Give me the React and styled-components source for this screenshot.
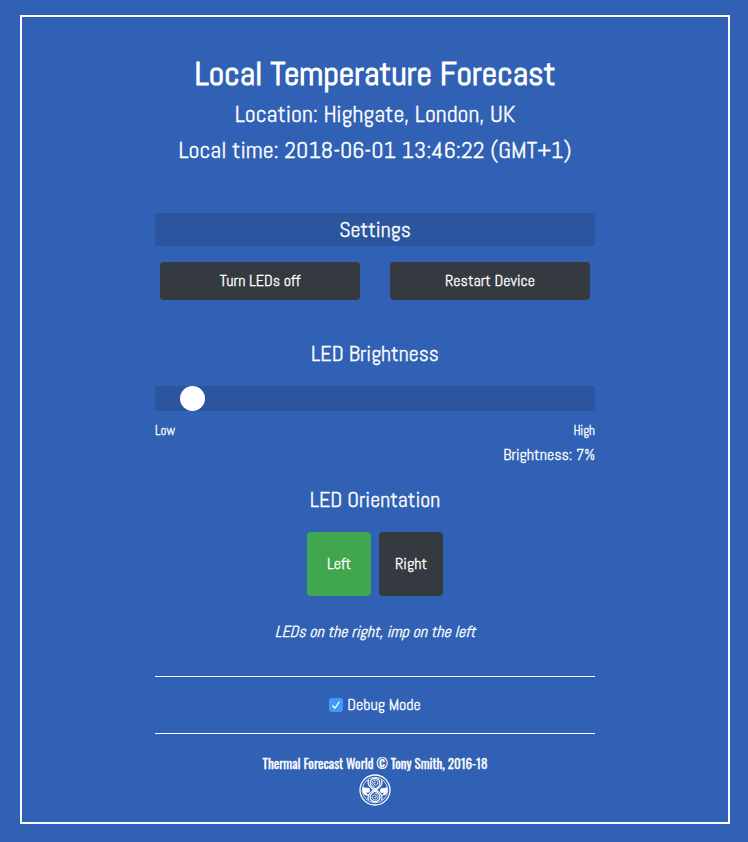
import React, { useState } from "react";
import styled, { createGlobalStyle } from "styled-components";

const GlobalStyle = createGlobalStyle`
  *, *::before, *::after { box-sizing: border-box; }
  body {
    margin: 0;
    background: #3061b4;
    color: #fff;
    font-family: Abel, "Liberation Sans Narrow", "Roboto Condensed", "Liberation Sans", sans-serif;
    font-size: 16px;
    line-height: 24px;
    -webkit-text-stroke: 0.3px currentColor;
  }
  button, input { font: inherit; }
`;

const Frame = styled.main`
  margin: 15px 18px 18px 20px;
  padding: 34px 20px 16px;
  border: 2px solid #fff;
  display: flex;
  flex-direction: column;
  align-items: center;
  text-align: center;
`;

const Title = styled.h1`
  margin: 0;
  font-size: 34px;
  line-height: 45px;
  font-weight: 700;
  -webkit-text-stroke: 0;
`;

const Info = styled.p`
  margin: 0;
  font-size: 24px;
  line-height: 36px;
`;

const Panel = styled.div`
  width: 100%;
  max-width: 440px;
  margin-top: 45px;
  display: flex;
  flex-direction: column;
`;

const Heading = styled.h2`
  margin: 0 0 16px;
  padding-bottom: 1px;
  font-size: 22px;
  line-height: 32px;
  font-weight: 400;
  background: ${(p) => (p.$bar ? "#2b569f" : "transparent")};
`;

const Section = styled.section`
  margin-top: ${(p) => p.$gap || 0}px;
`;

const Actions = styled.div`
  display: flex;
  gap: 30px;
  padding: 0 5px;
`;

const Button = styled.button`
  flex: 1;
  height: 38px;
  padding: 0;
  border: 0;
  border-radius: 4px;
  color: #fff;
  background: #343a40;
  cursor: pointer;
`;

const Slider = styled.input`
  display: block;
  appearance: none;
  width: 100%;
  height: 25px;
  margin: 0;
  background: #2b569f;
  &::-webkit-slider-thumb {
    appearance: none;
    width: 25px;
    height: 25px;
    border-radius: 50%;
    background: #fff;
  }
  &::-moz-range-thumb {
    width: 25px;
    height: 25px;
    border: 0;
    border-radius: 50%;
    background: #fff;
  }
`;

const Scale = styled.div`
  display: flex;
  justify-content: space-between;
  margin-top: 8px;
  font-size: 13px;
`;

const Reading = styled.output`
  display: block;
  text-align: right;
`;

const Sides = styled.div`
  display: flex;
  justify-content: center;
  gap: 8px;
`;

const SideButton = styled(Button)`
  flex: none;
  width: 64px;
  height: 64px;
  background: ${(p) => (p.$active ? "#3fa64d" : "#343a40")};
`;

const Note = styled.p`
  margin: 24px 0 32px;
  font-style: italic;
`;

const Debug = styled.label`
  display: flex;
  align-items: center;
  justify-content: center;
  gap: 4px;
  padding: 16px 0;
  border-top: 1px solid #fff;
  border-bottom: 1px solid #fff;
`;

const CheckBox = styled.span`
  display: grid;
  width: 14px;
  height: 14px;
  > * { grid-area: 1 / 1; }
`;

const CheckInput = styled.input`
  appearance: none;
  width: 14px;
  height: 14px;
  margin: 0;
  border-radius: 3px;
  background: #fff;
  &:checked { background: #3f99f8; }
`;

const Tick = styled.svg`
  pointer-events: none;
`;

const Footer = styled.footer`
  display: flex;
  flex-direction: column;
  align-items: center;
  margin-top: 18px;
  font-family: Oswald, Abel, "Liberation Sans Narrow", "Liberation Sans", sans-serif;
  font-size: 13px;
  line-height: 22px;
  font-weight: 400;
`;

const Seal = () => (
  <svg width="32" height="32" viewBox="0 0 64 64" fill="none" stroke="#fff" role="img" aria-label="Seal">
    <circle cx="32" cy="32" r="30" strokeWidth="2.6" />
    <circle cx="32" cy="32" r="25.5" strokeWidth="1.6" />
    <path strokeWidth="2.2" d="M19 52C15 42 24 36 31 31C40 25 44 21 41 14C38 7 26 7 23 14C20 21 24 25 33 31C40 36 49 42 45 52" />
    <path strokeWidth="2.2" d="M45 12C49 22 40 28 33 33C24 39 20 43 23 50C26 57 38 57 41 50C44 43 40 39 31 33C24 28 15 22 19 12" />
    <path strokeWidth="1.8" d="M32 26C25 23 24 16 29 13C34 10 40 15 37 20C34 24 28 21 30 17C31 15 34 16 33 18" />
    <path strokeWidth="1.8" d="M32 38C39 41 40 48 35 51C30 54 24 49 27 44C30 40 36 43 34 47C33 49 30 48 31 46" />
    <path fill="#fff" stroke="none" d="M8 25C13 31 19 24 22 31C23 37 17 39 15 36C15 40 18 42 21 40C17 47 8 42 7 34Z" />
    <path fill="#fff" stroke="none" d="M56 25L57 34C56 42 49 45 43 42C47 42 50 40 49 37C45 40 41 36 42 32C45 24 52 31 56 25Z" />
  </svg>
);

export default function App() {
  const [ledsOn, setLedsOn] = useState(true);
  const [brightness, setBrightness] = useState(7);
  const [side, setSide] = useState("left");
  const [debug, setDebug] = useState(true);

  return (
    <>
      <GlobalStyle />
      <Frame>
        <Title>Local Temperature Forecast</Title>
        <Info>Location: Highgate, London, UK</Info>
        <Info>Local time: 2018-06-01 13:46:22 (GMT+1)</Info>
        <Panel>
          <Section>
            <Heading $bar>Settings</Heading>
            <Actions>
              <Button type="button" onClick={() => setLedsOn(!ledsOn)}>
                {ledsOn ? "Turn LEDs off" : "Turn LEDs on"}
              </Button>
              <Button type="button">Restart Device</Button>
            </Actions>
          </Section>
          <Section $gap={37}>
            <Heading as="h3" id="brightness-label">LED Brightness</Heading>
            <Slider
              type="range"
              id="brightness"
              min="1"
              max="100"
              value={brightness}
              aria-labelledby="brightness-label"
              onChange={(e) => setBrightness(Number(e.target.value))}
            />
            <Scale>
              <span>Low</span>
              <span>High</span>
            </Scale>
            <Reading htmlFor="brightness">{`Brightness: ${brightness}%`}</Reading>
          </Section>
          <Section $gap={16}>
            <Heading as="h3">LED Orientation</Heading>
            <Sides>
              <SideButton type="button" $active={side === "left"} aria-pressed={side === "left"} onClick={() => setSide("left")}>
                Left
              </SideButton>
              <SideButton type="button" $active={side === "right"} aria-pressed={side === "right"} onClick={() => setSide("right")}>
                Right
              </SideButton>
            </Sides>
            <Note>LEDs on the right, imp on the left</Note>
          </Section>
          <Debug>
            <CheckBox>
              <CheckInput type="checkbox" checked={debug} onChange={(e) => setDebug(e.target.checked)} />
              {debug && (
                <Tick width="14" height="14" viewBox="0 0 14 14" fill="none" stroke="#fff" strokeWidth="1.3" aria-hidden="true">
                  <path d="M3.5 7.5L6 10.2L10.5 3.5" />
                </Tick>
              )}
            </CheckBox>
            Debug Mode
          </Debug>
          <Footer>
            <span>Thermal Forecast World © Tony Smith, 2016-18</span>
            <Seal />
          </Footer>
        </Panel>
      </Frame>
    </>
  );
}
